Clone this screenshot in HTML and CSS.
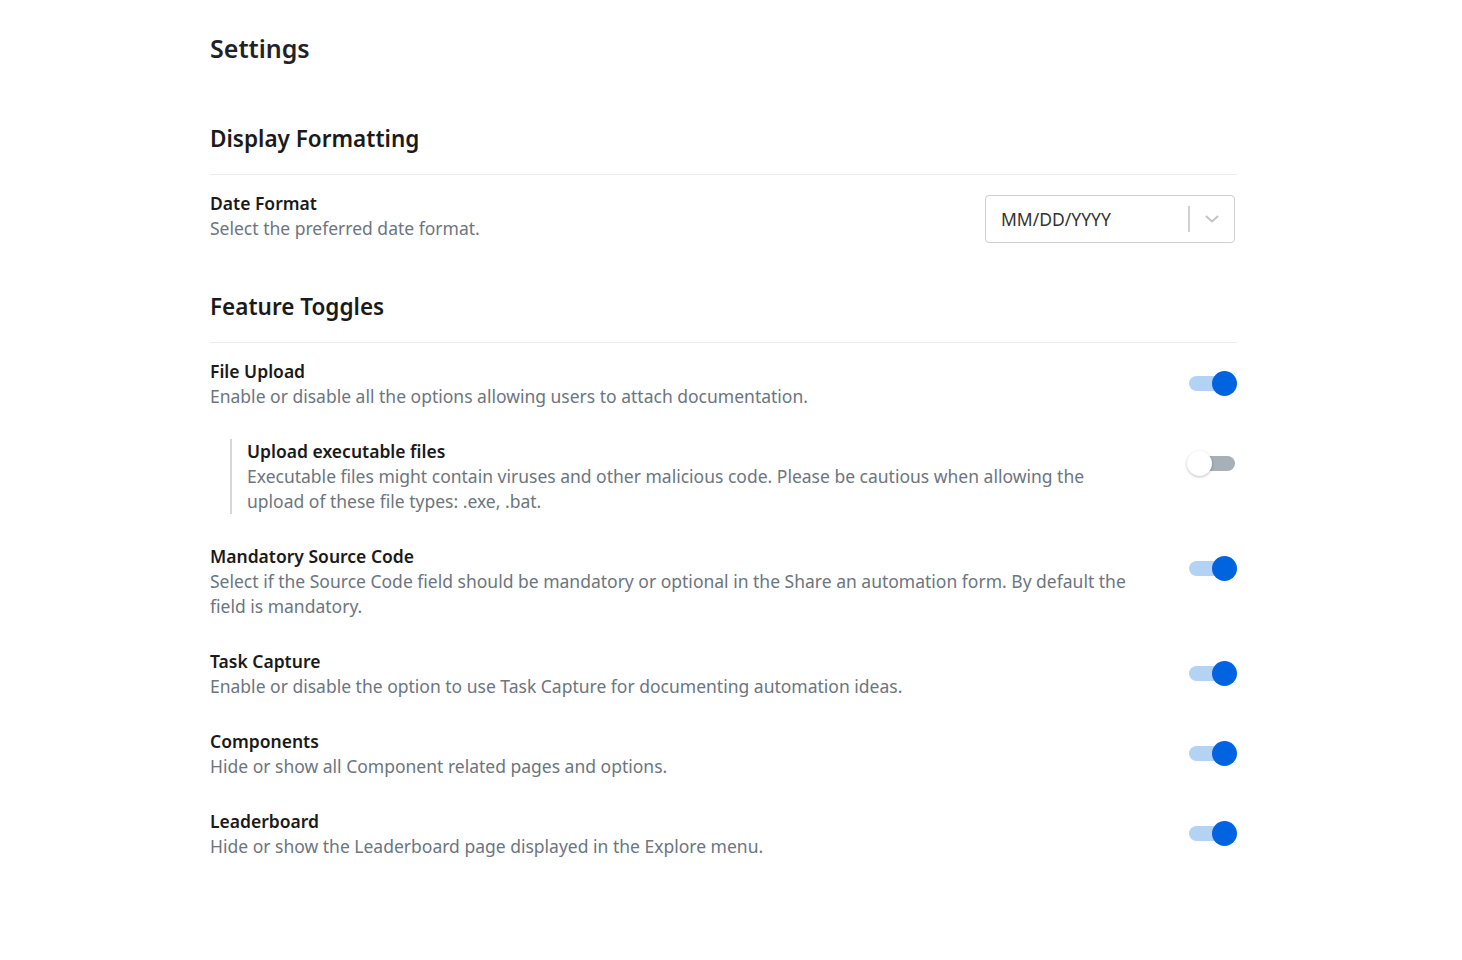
FILE: index.html
```html
<!DOCTYPE html>
<html lang="en">
<head>
<meta charset="utf-8">
<title>Settings</title>
<link rel="stylesheet" href="styles.css">
</head>
<body>
<main class="page">
  <h1 class="page-title">Settings</h1>

  <section class="section">
    <h2 class="section-title">Display Formatting</h2>
    <div class="row row-select">
      <div class="text">
        <div class="label">Date Format</div>
        <div class="desc">Select the preferred date format.</div>
      </div>
      <div class="select">
        <span class="select-value">MM/DD/YYYY</span>
        <span class="select-sep"></span>
        <svg class="select-arrow" width="16" height="14" viewBox="0 0 16 14"><path d="M2.5 4.5l5.5 5 5.5-5" fill="none" stroke="#c4c4c4" stroke-width="2" stroke-linecap="round" stroke-linejoin="round"/></svg>
      </div>
    </div>
  </section>

  <section class="section section-toggles">
    <h2 class="section-title">Feature Toggles</h2>
    <div class="row">
      <div class="text">
        <div class="label">File Upload</div>
        <div class="desc">Enable or disable all the options allowing users to attach documentation.</div>
      </div>
      <div class="toggle on"><span class="track"></span><span class="thumb"></span></div>
    </div>
    <div class="row row-nested">
      <div class="text nested">
        <div class="label">Upload executable files</div>
        <div class="desc">Executable files might contain viruses and other malicious code. Please be cautious when allowing the upload of these file types: .exe, .bat.</div>
      </div>
      <div class="toggle off"><span class="track"></span><span class="thumb"></span></div>
    </div>
    <div class="row">
      <div class="text">
        <div class="label">Mandatory Source Code</div>
        <div class="desc">Select if the Source Code field should be mandatory or optional in the Share an automation form. By default the field is mandatory.</div>
      </div>
      <div class="toggle on"><span class="track"></span><span class="thumb"></span></div>
    </div>
    <div class="row">
      <div class="text">
        <div class="label">Task Capture</div>
        <div class="desc">Enable or disable the option to use Task Capture for documenting automation ideas.</div>
      </div>
      <div class="toggle on"><span class="track"></span><span class="thumb"></span></div>
    </div>
    <div class="row">
      <div class="text">
        <div class="label">Components</div>
        <div class="desc">Hide or show all Component related pages and options.</div>
      </div>
      <div class="toggle on"><span class="track"></span><span class="thumb"></span></div>
    </div>
    <div class="row">
      <div class="text">
        <div class="label">Leaderboard</div>
        <div class="desc">Hide or show the Leaderboard page displayed in the Explore menu.</div>
      </div>
      <div class="toggle on"><span class="track"></span><span class="thumb"></span></div>
    </div>
  </section>
</main>
</body>
</html>
```

FILE: styles.css
```css
* { box-sizing: border-box; }
html, body { margin: 0; padding: 0; background: #ffffff; }
body {
  font-family: "Noto Sans", "Open Sans", "Liberation Sans", sans-serif;
  color: #1a1a1a;
}
.page {
  width: 1027px;
  margin-left: 210px;
  padding-top: 31px;
}
.page-title {
  margin: 0;
  font-size: 25px;
  line-height: 34px;
  font-weight: 600;
  color: #1f2329;
}
.section { margin-top: 59px; }
.section-toggles { margin-top: 49px; }
.section-title {
  margin: 0;
  font-size: 22.5px;
  line-height: 30px;
  font-weight: 600;
  color: #1a1a1a;
  padding-bottom: 20px;
  border-bottom: 1px solid #ebebeb;
}
.row {
  display: flex;
  justify-content: space-between;
  align-items: flex-start;
  margin-top: 16px;
}
.section-toggles .row + .row { margin-top: 30px; }
.text { flex: 1; max-width: 928px; }
.label {
  font-size: 17.5px;
  line-height: 25px;
  font-weight: 600;
  color: #1a1a1a;
}
.desc {
  font-size: 17.5px;
  line-height: 25px;
  color: #6c7580;
}
.nested {
  margin-left: 20px;
  padding-left: 15px;
  border-left: 2px solid #d6d6d6;
  max-width: 908px;
}
.select {
  flex: none;
  width: 250px;
  height: 48px;
  margin-top: 4px;
  margin-right: 2px;
  border: 1px solid #cfcfcf;
  border-radius: 4px;
  display: flex;
  align-items: center;
  padding: 0 14px 0 15px;
}
.select-value {
  flex: 1;
  font-size: 17.5px;
  color: #333333;
}
.select-sep {
  width: 2px;
  height: 26px;
  background: #d0d0d0;
  margin-right: 14px;
}
.select-arrow { display: block; }
.toggle {
  position: relative;
  width: 48px;
  height: 50px;
  flex: none;
}
.toggle .track {
  position: absolute;
  left: 0;
  top: 17px;
  width: 46px;
  height: 15px;
  border-radius: 8px;
}
.toggle .thumb {
  position: absolute;
  top: 12px;
  width: 25px;
  height: 25px;
  border-radius: 50%;
}
.toggle.on .track { background: #b3d3f5; }
.toggle.on .thumb { left: 23px; background: #0063e0; }
.toggle.off .track { background: #a6b0b6; left: 0; }
.toggle.off .thumb {
  left: -2px;
  background: #ffffff;
  box-shadow: 0 1px 3px rgba(0, 0, 0, 0.25);
}
```
